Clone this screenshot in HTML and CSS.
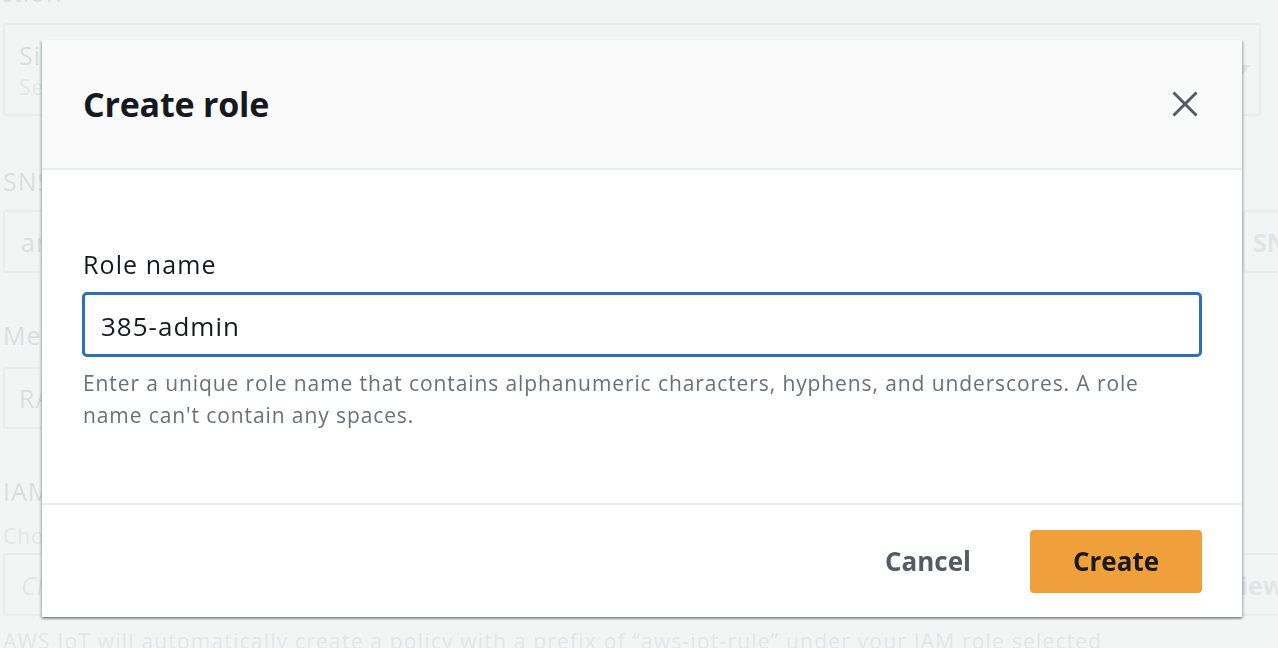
FILE: index.html
```html
<!DOCTYPE html>
<html lang="en">
<head>
<meta charset="utf-8">
<title>Create role</title>
<link rel="stylesheet" href="styles.css">
</head>
<body>
<div class="page">
  <div class="label top-label">Action *</div>
  <div class="select big">
    <div class="select-text">
      <div class="select-title">Simple Notification Service</div>
      <div class="select-sub">Send a message as an SNS push notification</div>
    </div>
    <span class="caret"></span>
  </div>

  <div class="label label-sns">SNS target</div>
  <div class="row">
    <div class="field">arn:aws:sns:us-east-1:385:admin-topic</div>
    <div class="side-btn">SNS topic</div>
  </div>

  <div class="label label-fmt">Message format</div>
  <div class="select narrow">
    <div class="select-title">RAW</div>
  </div>

  <div class="label label-iam">IAM role</div>
  <div class="desc">Choose or create a role to grant AWS IoT access to perform this action.</div>
  <div class="row">
    <div class="field field-short placeholder">Choose a role</div>
    <div class="side-btn side-view">View</div>
  </div>
  <div class="note">AWS IoT will automatically create a policy with a prefix of “aws-iot-rule” under your IAM role selected</div>
</div>

<div class="overlay"></div>

<div class="modal" role="dialog">
  <div class="modal-header">
    <h2 class="modal-title">Create role</h2>
    <button class="close" aria-label="Close">
      <svg width="26" height="26" viewBox="0 0 26 26"><path d="M1.5 1.5 L24.5 24.5 M24.5 1.5 L1.5 24.5" stroke="#545b64" stroke-width="3" fill="none"/></svg>
    </button>
  </div>
  <div class="modal-body">
    <label class="form-label">Role name</label>
    <div class="input">385-admin</div>
    <p class="hint">Enter a unique role name that contains alphanumeric characters, hyphens, and underscores. A role name can't contain any spaces.</p>
  </div>
  <div class="modal-footer">
    <button class="btn-link">Cancel</button>
    <button class="btn-primary">Create</button>
  </div>
</div>
</body>
</html>
```

FILE: styles.css
```css
* { box-sizing: border-box; }
html, body { margin: 0; padding: 0; }
body {
  width: 1278px;
  height: 648px;
  overflow: hidden;
  background: #ffffff;
  font-family: "Open Sans", "Noto Sans", sans-serif;
  color: #16191f;
}

/* background page */
.page {
  padding-left: 3px;
  width: 1278px;
  overflow: hidden;
}
.label {
  font-size: 25px;
  line-height: 32px;
  letter-spacing: 1px;
  margin-bottom: 13px;
}
.top-label {
  margin-top: -24px;
  margin-bottom: 15px;
  margin-left: -20px;
}
.label-sns { margin-top: 49px; }
.label-fmt { margin-top: 46px; margin-bottom: 16px; }
.label-iam { margin-top: 46px; margin-bottom: 0; }
.select {
  width: 1258px;
  height: 62px;
  border: 2px solid #aab7b8;
  border-radius: 4px;
  display: flex;
  align-items: center;
  justify-content: space-between;
  padding: 0 8px 0 14px;
}
.select.big { height: 93px; }
.select.narrow { width: 1220px; }
.select-title { font-size: 25px; line-height: 34px; letter-spacing: 1px; }
.select-sub { font-size: 21px; line-height: 30px; color: #687078; letter-spacing: 0.9px; }
.caret {
  width: 0; height: 0;
  border-left: 9px solid transparent;
  border-right: 9px solid transparent;
  border-top: 10px solid #545b64;
}
.row { display: flex; }
.field {
  flex-shrink: 0;
  width: 1240px;
  height: 63px;
  border: 2px solid #aab7b8;
  border-radius: 4px;
  padding: 0 16px;
  display: flex;
  align-items: center;
  font-size: 25px;
  letter-spacing: 1px;
}
.field-short { width: 1205px; }
.field.placeholder { font-style: italic; color: #687078; }
.side-btn {
  flex-shrink: 0;
  width: 200px;
  height: 63px;
  border: 2px solid #aab7b8;
  border-radius: 4px;
  display: flex;
  align-items: center;
  padding-left: 8px;
  font-size: 25px;
  font-weight: 700;
  color: #545b64;
}
.side-view { padding-left: 14px; }
.desc {
  font-size: 21px;
  line-height: 30px;
  letter-spacing: 0.9px;
  color: #687078;
  margin-top: 14px;
  margin-bottom: 2px;
}
.note {
  font-size: 21px;
  line-height: 30px;
  letter-spacing: 1.2px;
  color: #687078;
  margin-top: 10px;
  white-space: nowrap;
}

.overlay {
  position: fixed;
  inset: 0;
  background: rgba(242, 243, 243, 0.9);
}

/* modal */
.modal {
  position: fixed;
  left: 42px;
  top: 40px;
  width: 1200px;
  background: #ffffff;
  box-shadow: 0 2px 2px 0 rgba(0, 28, 36, 0.35), 2px 1px 2px 0 rgba(0, 28, 36, 0.15), -2px 1px 2px 0 rgba(0, 28, 36, 0.15);
}
.modal-header {
  height: 130px;
  background: #fafafa;
  border-bottom: 2px solid #eaeded;
  display: flex;
  align-items: center;
  justify-content: space-between;
  padding: 0 44px 0 41px;
}
.modal-title {
  margin: 0;
  font-size: 34px;
  font-weight: 700;
  letter-spacing: -0.2px;
  color: #16191f;
}
.close {
  background: none;
  border: 0;
  padding: 0;
  width: 26px;
  height: 26px;
  display: flex;
}
.modal-body {
  height: 335px;
  padding: 78px 40px 0 40px;
  border-bottom: 2px solid #eaeded;
}
.form-label {
  display: block;
  font-size: 25px;
  line-height: 32px;
  letter-spacing: 1.1px;
  margin-left: 1px;
  margin-bottom: 12px;
}
.input {
  height: 65px;
  border: 3px solid #2f6fb5;
  border-radius: 5px;
  padding: 0 16px;
  display: flex;
  align-items: center;
  font-size: 26px;
  letter-spacing: 1px;
  padding-top: 3px;
  color: #16191f;
}
.hint {
  margin: 10px 0 0 1px;
  font-size: 21px;
  line-height: 32px;
  letter-spacing: 0.9px;
  color: #687078;
}
.modal-footer {
  height: 112px;
  display: flex;
  align-items: center;
  justify-content: flex-end;
  padding-right: 40px;
}
.btn-link {
  background: none;
  border: 0;
  font-family: inherit;
  font-size: 26px;
  font-weight: 700;
  color: #545b64;
  padding: 0 20px;
  margin-right: 39px;
}
.btn-primary {
  font-family: inherit;
  width: 172px;
  height: 63px;
  border: 0;
  border-radius: 4px;
  background: #f0a03a;
  font-size: 26px;
  font-weight: 700;
  color: #16191f;
}
```
